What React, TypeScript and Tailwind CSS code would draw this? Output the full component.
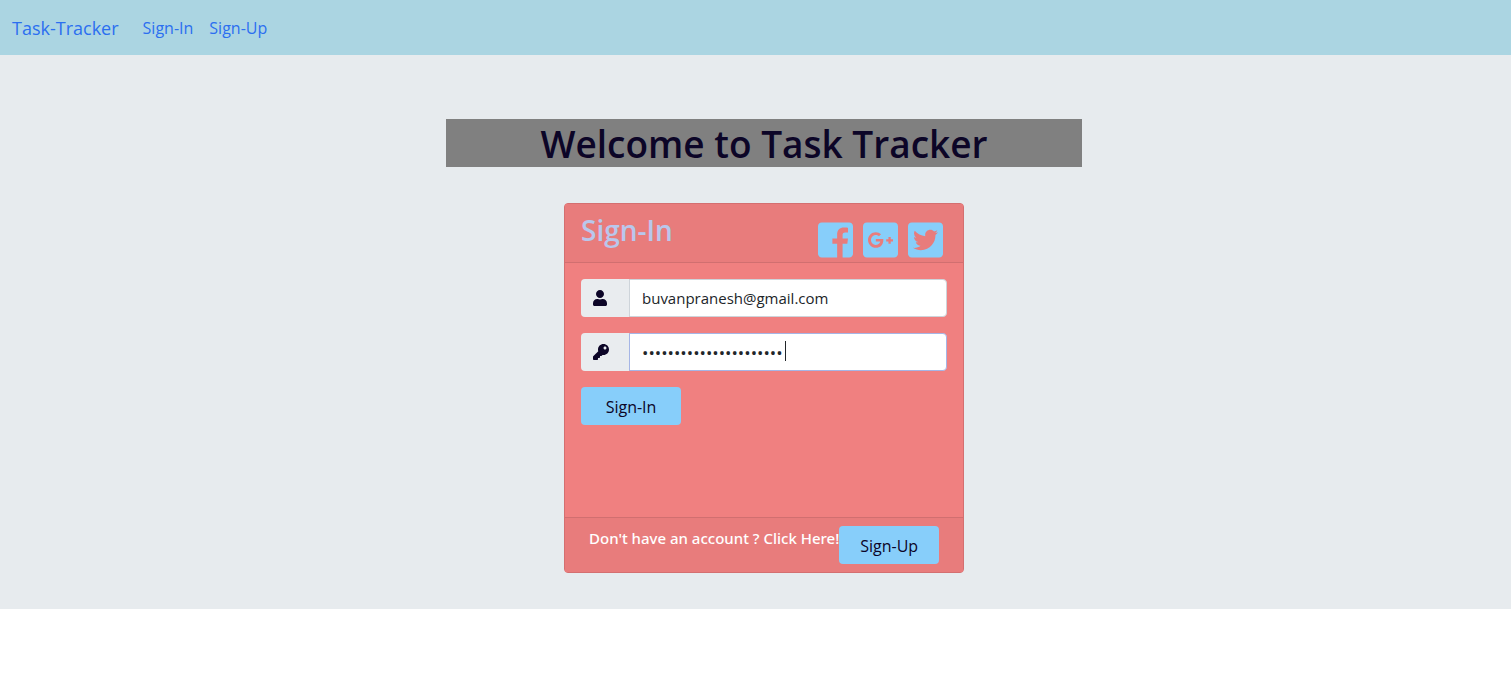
import { FaGooglePlusSquare, FaKey, FaTwitterSquare, FaUser } from "react-icons/fa";

function FacebookSquare() {
  return (
    <svg viewBox="0 0 448 512" className="h-10 w-[35px]" fill="currentColor" aria-hidden="true">
      <path d="M448 80v352c0 26.500-21.500 48-48 48h-85.300V302.800h60.600l8.700-67.600h-69.300V192c0-19.600 5.400-32.900 33.500-32.900H384V98.700c-6.200-.8-27.400-2.700-52.200-2.700-51.600 0-87 31.500-87 89.400v49.900H184v67.600h60.900V480H48c-26.500 0-48-21.500-48-48V80c0-26.500 21.500-48 48-48h352c26.500 0 48 21.500 48 48z" />
    </svg>
  );
}

const buttonClass = "h-[38px] w-[100px] cursor-pointer rounded bg-[#87cefa] pt-px text-base text-[#0c0527]";
const inputClass = "h-[38px] w-full rounded-r border bg-white px-3 text-[#212529] outline-none";
const addonClass = "flex w-12 shrink-0 items-center rounded-l bg-[#e9ecef] pl-3 text-[#0c0527]";

export default function App() {
  return (
    <div className="min-h-screen bg-white font-['Open_Sans','Noto_Sans',sans-serif] text-[15px] leading-6">
      <nav className="flex h-[55px] items-center bg-[#abd5e2] px-3 text-base text-[#2b6ff0]">
        <a href="#home" className="mr-6 text-lg">Task-Tracker</a>
        <a href="#sign-in" className="mr-4">Sign-In</a>
        <a href="#sign-up">Sign-Up</a>
      </nav>

      <main className="flex flex-col items-center bg-[#e7ebee] pt-16 pb-9 pl-[17px]">
        <h1 className="w-full max-w-[636px] bg-[#808080] pt-0.5 text-center text-[37px] font-semibold leading-[46px] text-[#0c0527]">
          Welcome to Task Tracker
        </h1>

        <section className="mt-9 flex min-h-[370px] w-full max-w-[400px] flex-col rounded border border-[#d46f70] bg-[#f08080]">
          <header className="flex h-[59px] items-start justify-between border-b border-[#d16f70] bg-[#e87c7c] pl-4 pr-5">
            <h2 className="pt-2 text-[28px] font-semibold leading-9 text-[#b9c7ec]">Sign-In</h2>
            <div className="flex gap-[10px] pt-4 text-[#87cefa]">
              <a href="#facebook" aria-label="Facebook"><FacebookSquare /></a>
              <a href="#google" aria-label="Google Plus"><FaGooglePlusSquare className="h-10 w-[35px]" /></a>
              <a href="#twitter" aria-label="Twitter"><FaTwitterSquare className="h-10 w-[35px]" /></a>
            </div>
          </header>

          <form className="flex grow flex-col items-start gap-4 p-4" onSubmit={(e) => e.preventDefault()}>
            <div className="flex w-full">
              <label htmlFor="email" aria-label="Email" className={addonClass}><FaUser className="h-4 w-[14px]" /></label>
              <input id="email" type="email" defaultValue="buvanpranesh@gmail.com" className={inputClass + " border-[#ced4da]"} />
            </div>
            <div className="flex w-full">
              <label htmlFor="password" aria-label="Password" className={addonClass}><FaKey className="h-4 w-4" /></label>
              <div className="relative grow">
                <input id="password" type="password" defaultValue="buvanpraneshtasktracke" className={inputClass + " border-[#a5b5e6] text-[17px]"} />
                <span className="absolute left-[156px] top-2 h-5 w-px bg-[#212529]" />
              </div>
            </div>
            <button type="submit" className={buttonClass}>Sign-In</button>
          </form>

          <footer className="flex items-start justify-end border-t border-[#d16f70] bg-[#e87c7c] py-2 pl-6 pr-6 text-white">
            <span className="whitespace-nowrap font-['Noto_Sans',sans-serif] font-medium">Don't have an account ? Click Here!</span>
            <button type="button" className={buttonClass}>Sign-Up</button>
          </footer>
        </section>
      </main>
    </div>
  );
}
